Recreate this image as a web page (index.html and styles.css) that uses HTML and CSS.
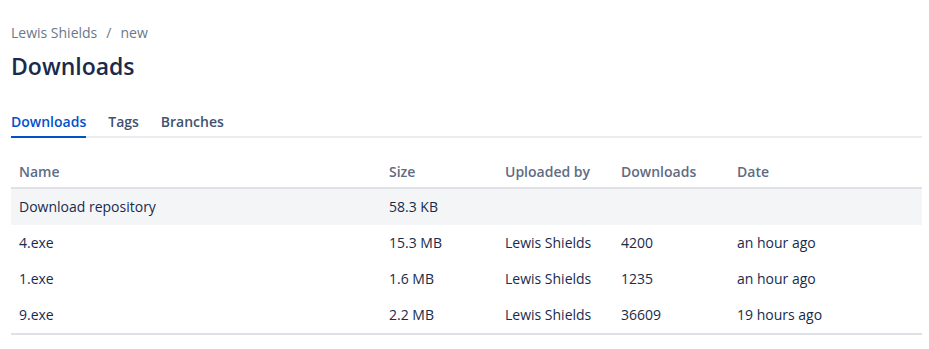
FILE: index.html
```html
<!DOCTYPE html>
<html lang="en">
<head>
    <meta charset="UTF-8">
    <meta name="viewport" content="width=device-width, initial-scale=1.0">
    <title>Downloads</title>
    <link rel="stylesheet" href="styles.css">
</head>
<body>

    <div class="page">
        <div class="breadcrumbs">
            <a href="#" class="crumb">Lewis Shields</a>
            <span class="sep">/</span>
            <a href="#" class="crumb">new</a>
        </div>
        <h1 class="title">Downloads</h1>

        <div class="tabs">
            <a href="#" class="tab active">Downloads</a>
            <a href="#" class="tab">Tags</a>
            <a href="#" class="tab">Branches</a>
        </div>

        <table class="downloads">
            <thead>
                <tr>
                    <th class="col-name">Name</th>
                    <th class="col-size">Size</th>
                    <th class="col-user">Uploaded by</th>
                    <th class="col-count">Downloads</th>
                    <th>Date</th>
                </tr>
            </thead>
            <tbody>
                <tr class="repo-row">
                    <td>Download repository</td>
                    <td>58.3 KB</td>
                    <td></td>
                    <td></td>
                    <td></td>
                </tr>
                <tr>
                    <td>4.exe</td>
                    <td>15.3 MB</td>
                    <td>Lewis Shields</td>
                    <td>4200</td>
                    <td class="date">an hour ago</td>
                </tr>
                <tr>
                    <td>1.exe</td>
                    <td>1.6 MB</td>
                    <td>Lewis Shields</td>
                    <td>1235</td>
                    <td class="date">an hour ago</td>
                </tr>
                <tr>
                    <td>9.exe</td>
                    <td>2.2 MB</td>
                    <td>Lewis Shields</td>
                    <td>36609</td>
                    <td class="date">19 hours ago</td>
                </tr>
            </tbody>
        </table>
    </div>

</body>
</html>
```

FILE: styles.css
```css
body {
    font-family: 'Open Sans', 'Noto Sans', sans-serif;
    background-color: #fff;
    color: #172b4d;
    margin: 0;
}

.page {
    padding: 23px 7px 0 11px;
}

.breadcrumbs {
    font-size: 14px;
    line-height: 20px;
    color: #6b778c;
    display: flex;
    gap: 9px;
}

.crumb {
    color: #6b778c;
    text-decoration: none;
}

.title {
    font-size: 23px;
    font-weight: 600;
    line-height: 28px;
    margin: 9px 0 0;
    color: #172b4d;
}

.tabs {
    display: flex;
    gap: 22px;
    margin-top: 32px;
    border-bottom: 2px solid #ebecf0;
}

.tab {
    font-size: 14px;
    font-weight: 600;
    line-height: 20px;
    padding-bottom: 4px;
    margin-bottom: -2px;
    color: #42526e;
    text-decoration: none;
    border-bottom: 2px solid transparent;
}

.tab.active {
    color: #0052cc;
    border-bottom-color: #0052cc;
}

.downloads {
    width: 100%;
    margin-top: 20px;
    border-collapse: collapse;
    font-size: 14px;
    table-layout: fixed;
}

.downloads th {
    text-align: left;
    font-size: 14px;
    font-weight: 600;
    color: #5e6c84;
    padding: 4px 8px 5px;
    line-height: 20px;
    border-bottom: 2px solid #dfe1e6;
}

.col-name {
    width: 354px;
}

.col-size,
.col-user,
.col-count {
    width: 100px;
}

.downloads td {
    padding: 8px;
    line-height: 20px;
    color: #172b4d;
    height: 20px;
}

.downloads tbody tr:last-child td {
    border-bottom: 2px solid #dfe1e6;
}

.repo-row td {
    background-color: #f4f5f7;
}

.date {
    vertical-align: top;
    padding-top: 7px;
}
```
